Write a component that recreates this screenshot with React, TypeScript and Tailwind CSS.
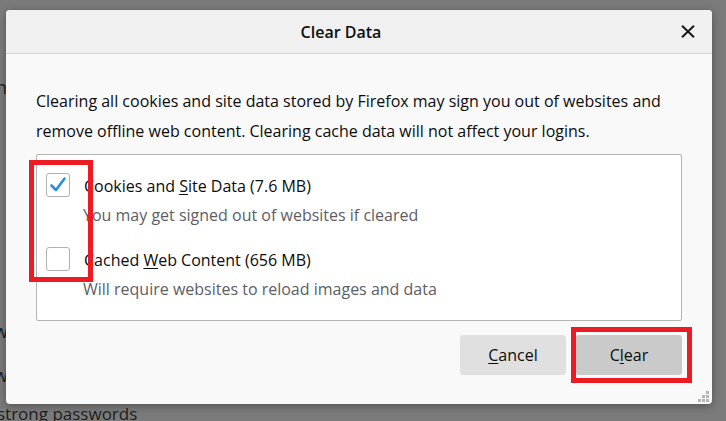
const font = { fontFamily: '"Open Sans", "Noto Sans", sans-serif' }

function Box({ checked }: { checked?: boolean }) {
  return (
    <div className="w-[24px] h-[24px] shrink-0 rounded-[3px] border border-[#b1b1b1] bg-white flex items-center justify-center">
      {checked && (
        <svg width="18" height="18" viewBox="0 0 18 18" fill="none">
          <path d="M2.5 9.5 L7 14 L15.5 2.5" stroke="#2b8ce0" strokeWidth="2.6" strokeLinecap="round" strokeLinejoin="round" />
        </svg>
      )}
    </div>
  )
}

export default function App() {
  return (
    <div className="relative w-[726px] h-[421px] overflow-hidden bg-[#7b7b7b] text-[#0c0c0d]" style={font}>
      {/* page behind the overlay */}
      <span className="absolute left-[-4px] top-[74px] text-[18px] text-[#1e1e1e]">n</span>
      <span className="absolute left-[-6px] top-[318px] text-[18px] text-[#1e1e1e]">w</span>
      <span className="absolute left-[-6px] top-[362px] text-[18px] text-[#1e1e1e]">w</span>
      <span className="absolute left-[-3px] top-[401px] text-[17px] text-[#1e1e1e]">strong passwords</span>

      {/* dialog */}
      <div className="absolute left-[6px] top-[10px] w-[706px] h-[394px] rounded-[4px] bg-[#f9f9f9] shadow-[0_2px_8px_rgba(0,0,0,0.35)] flex flex-col overflow-hidden">
        <div className="h-[44px] shrink-0 bg-[#f0f0f0] border-b border-[#d4d4d4] flex items-center">
          <div className="flex-1 text-center text-[16px] font-semibold pl-[6px]">Clear Data</div>
          <div className="w-[42px] flex items-center justify-center pr-[6px]">
            <svg width="14" height="13" viewBox="0 0 14 13" fill="none">
              <path d="M1 0.8 L13 12.2 M13 0.8 L1 12.2" stroke="#1a1a1a" strokeWidth="2" />
            </svg>
          </div>
        </div>

        <div className="px-[30px] pt-[32px] text-[16px] leading-[30px]">
          <p>
            Clearing all cookies and site data stored by Firefox may sign you out of websites and remove offline web content. Clearing cache data will not affect your logins.
          </p>
        </div>

        <div className="mx-[30px] mt-[8px] h-[167px] rounded-[2px] border border-[#b5b5b5] bg-white pt-[18px] px-[9px] flex flex-col gap-[19px]">
          <div className="flex gap-[13px]">
            <Box checked />
            <div className="flex flex-col pt-[1px]">
              <span className="text-[16px] leading-[24px] pl-[1px]">
                Cookies and <u className="underline-offset-2">S</u>ite Data (7.6 MB)
              </span>
              <span className="text-[16px] leading-[26px] mt-[4px] text-[#5d5d66]">You may get signed out of websites if cleared</span>
            </div>
          </div>
          <div className="flex gap-[13px]">
            <Box />
            <div className="flex flex-col pt-[1px]">
              <span className="text-[16px] leading-[24px] pl-[1px]">
                Cached <u className="underline-offset-2">W</u>eb Content (656 MB)
              </span>
              <span className="text-[16px] leading-[26px] mt-[4px] text-[#5d5d66]">Will require websites to reload images and data</span>
            </div>
          </div>
        </div>

        <div className="flex justify-end gap-[10px] px-[30px] mt-[14px]">
          <button className="w-[106px] h-[40px] rounded-[3px] bg-[#e0e0e0] text-[16px]">
            <u className="underline-offset-2">C</u>ancel
          </button>
          <button className="w-[106px] h-[40px] rounded-[3px] bg-[#cacaca] text-[16px]">
            C<u className="underline-offset-2">l</u>ear
          </button>
        </div>

        {/* resize grip */}
        <svg className="absolute right-[3px] bottom-[2px]" width="11" height="11" viewBox="0 0 11 11">
          <rect x="8" y="0" width="3" height="3" fill="#b4b4b4" />
          <rect x="4" y="4" width="3" height="3" fill="#b4b4b4" />
          <rect x="8" y="4" width="3" height="3" fill="#b4b4b4" />
          <rect x="0" y="8" width="3" height="3" fill="#b4b4b4" />
          <rect x="4" y="8" width="3" height="3" fill="#b4b4b4" />
          <rect x="8" y="8" width="3" height="3" fill="#b4b4b4" />
        </svg>
      </div>

      {/* red annotation frames */}
      <div className="absolute left-[29px] top-[160px] w-[64px] h-[122px] border-[5px] border-[#ed1c24]" />
      <div className="absolute left-[571px] top-[327px] w-[121px] h-[56px] border-[5px] border-[#ed1c24]" />
    </div>
  )
}
